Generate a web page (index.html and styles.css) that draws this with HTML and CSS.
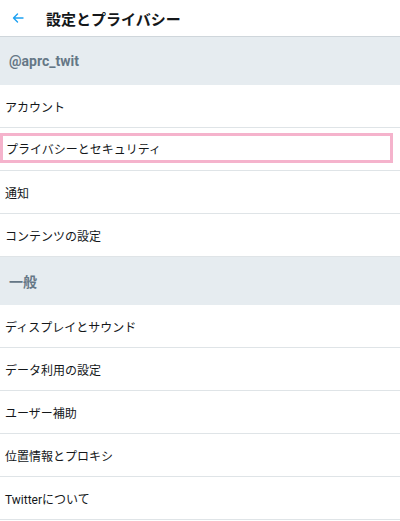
FILE: index.html
```html
<!DOCTYPE html>
<html lang="ja">
<head>
<meta charset="utf-8">
<link rel="stylesheet" href="styles.css">
</head>
<body>
<header class="topbar">
  <svg class="back" width="12" height="10" viewBox="0 0 12 10"><path d="M11 5H1.5M5.5 1L1.5 5l4 4" fill="none" stroke="#1da1f2" stroke-width="1.4" stroke-linecap="round" stroke-linejoin="round"/></svg>
  <h1 class="title">設定とプライバシー</h1>
</header>
<div class="section">@aprc_twit</div>
<div class="row">アカウント</div>
<div class="row row-hl"><div class="hl">プライバシーとセキュリティ</div></div>
<div class="row">通知</div>
<div class="row">コンテンツの設定</div>
<div class="section">一般</div>
<div class="row">ディスプレイとサウンド</div>
<div class="row">データ利用の設定</div>
<div class="row">ユーザー補助</div>
<div class="row">位置情報とプロキシ</div>
<div class="row">Twitterについて</div>
</body>
</html>
```
FILE: styles.css
```css
html, body { margin: 0; padding: 0; background: #fff; }
body {
  font-family: Roboto, "Noto Sans CJK JP", sans-serif;
  color: #14171a;
  width: 400px;
  overflow: hidden;
}
.topbar {
  height: 36px;
  display: flex;
  align-items: center;
  border-bottom: 1px solid #cfd6db;
  box-sizing: content-box;
}
.back { margin-left: 12px; margin-right: 22px; }
.title {
  margin: 0;
  font-size: 15px;
  font-weight: 700;
  color: #14171a;
}
.section {
  height: 48px;
  display: flex;
  align-items: center;
  padding-left: 9px;
  background: #e6ecf0;
  color: #657786;
  font-size: 14px;
  font-weight: 700;
}
.row {
  height: 42px;
  border-bottom: 1px solid #dfe4e7;
  display: flex;
  align-items: center;
  padding-left: 5px;
  font-size: 12px;
}
.row-hl { padding-left: 0; align-items: flex-start; }
.hl {
  margin-top: 5px;
  width: 384px;
  height: 24px;
  border: 3px solid #f5b3cc;
  display: flex;
  align-items: center;
  padding-left: 3px;
}
```
